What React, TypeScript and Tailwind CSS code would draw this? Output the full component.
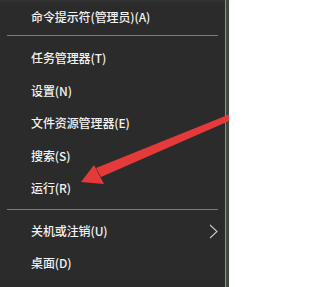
import React from 'react';

const font = { fontFamily: '"Noto Sans CJK SC", "Noto Sans", sans-serif' };

const MenuRow: React.FC<{ label: string; h?: string; submenu?: boolean }> = ({ label, h = 'h-[32.5px]', submenu }) => (
  <div className={`${h} flex items-center justify-between pl-[31px] pr-[7px] shrink-0`}>
    <span className="text-[12px] leading-none font-medium text-[#f2f2f2] tracking-[-0.1px]">{label}</span>
    {submenu && (
      <svg width="9" height="15" viewBox="0 0 9 15" className="text-[#c8c8c8]">
        <path d="M1 1 L8 7.5 L1 14" fill="none" stroke="currentColor" strokeWidth="1.1" />
      </svg>
    )}
  </div>
);

const Separator: React.FC<{ top: string; bottom: string }> = ({ top, bottom }) => (
  <div className={`${top} ${bottom} pl-[7px] pr-[7px] shrink-0`}>
    <div className="h-px bg-[#7b7b7b]" />
  </div>
);

export default function App() {
  return (
    <div className="relative w-[229px] h-[287px] overflow-hidden flex bg-[#2b2b2b]" style={font}>
      {/* menu panel */}
      <div className="w-[225px] h-full flex flex-col bg-[#2b2b2b] border-t-2 border-[#333333]">
        <MenuRow label="命令提示符(管理员)(A)" h="h-[29px]" />
        <Separator top="pt-[4px]" bottom="pb-[6px]" />
        <MenuRow label="任务管理器(T)" />
        <MenuRow label="设置(N)" />
        <MenuRow label="文件资源管理器(E)" />
        <MenuRow label="搜索(S)" />
        <MenuRow label="运行(R)" />
        <Separator top="pt-[4.5px]" bottom="pb-[5px]" />
        <MenuRow label="关机或注销(U)" h="h-[32px]" submenu />
        <MenuRow label="桌面(D)" h="h-[32px]" />
      </div>
      {/* desktop edge behind the menu */}
      <div className="flex-1 h-full border-l border-[#8a918a] bg-[#3f4a40]" />

      {/* red annotation arrow */}
      <svg className="absolute inset-0 pointer-events-none" width="229" height="287" viewBox="0 0 229 287">
        <polygon points="96,168 229,114.5 229,121 101,177" fill="#e53a3a" />
        <polygon points="81,182 94,165 104,184" fill="#e53a3a" />
      </svg>
    </div>
  );
}
